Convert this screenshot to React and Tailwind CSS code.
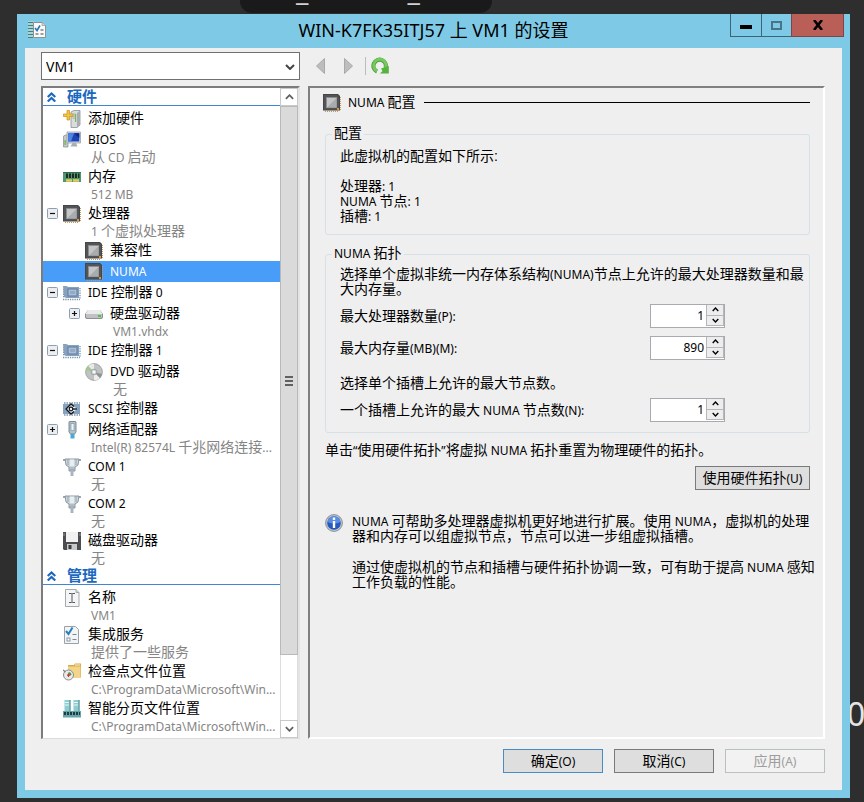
import { useState } from 'react'

// latin runs are set a little smaller than the chinese text around them
function Mixed({ text }) {
    return (
        <span>
            {text.split(/([\u0000-\u00ff\u201c\u201d]+)/).map((part, i) =>
                i % 2 ? (
                    <span key={i} className="font-['Noto_Sans',sans-serif] text-[12px] leading-none">{part}</span>
                ) : part
            )}
        </span>
    )
}

function Icon({ children }) {
    return (
        <svg viewBox="0 0 18 18" className="w-[18px] h-[18px] shrink-0" aria-hidden="true">
            {children}
        </svg>
    )
}

const ChipIcon = () => (
    <Icon>
        <path d="M2 17.500H16M17.500 3V16" stroke="#c79a5a" strokeWidth="1" strokeDasharray="1 1" />
        <path d="M0 0H15L17 2V16.500H0Z" fill="#454647" />
        <path d="M1 1H14.500L16 3V15.500H1Z" fill="#525457" />
        <rect x="3" y="3" width="11" height="11" fill="#8a8c8e" />
        <rect x="4" y="4" width="9.500" height="9.500" fill="#a9abad" />
        <path d="M4 13.500V4H13.500Z" fill="#c4c5c6" />
        <rect x="14" y="14" width="2" height="2" fill="#e0982e" />
    </Icon>
)

const AddIcon = () => (
    <Icon>
        <path d="M8 2L11 0.500H17V15L14 17.500H8Z" fill="#d9dbdc" stroke="#8b9092" strokeWidth=".8" />
        <path d="M14 3L17 0.500V15L14 17.500Z" fill="#a8adb0" />
        <path d="M9.500 4H12.500M9.500 6H12.500M9.500 8H12.500" stroke="#9ba1a4" strokeWidth=".8" />
        <rect x="12" y="4" width="1.200" height="8" fill="#75b956" />
        <path d="M4 0.500H6.500V4H10V6.500H6.500V10H4V6.500H0.500V4H4Z" fill="#f4c33c" stroke="#c98f1c" strokeWidth=".7" />
    </Icon>
)

const BiosIcon = () => (
    <Icon>
        <path d="M0.500 5L2.500 4H5V16H0.500Z" fill="#c3c8cb" stroke="#838a8f" strokeWidth=".7" />
        <rect x="1.500" y="9" width="1.200" height="5" fill="#6bb34c" />
        <path d="M4 1H17.500V12H4Z" fill="#d5d9dc" stroke="#8f979c" strokeWidth=".7" />
        <path d="M5.200 2.200H16.300V10.500H5.200Z" fill="#1d45b8" />
        <path d="M5.200 2.200H11L8 10.500H5.200Z" fill="#4e83e8" />
        <path d="M11 2.200H16.300V7Z" fill="#0c2683" />
        <path d="M9.500 12H13L14.500 15.500H7.500Z" fill="#a8afb4" />
    </Icon>
)

const MemoryIcon = () => (
    <Icon>
        <rect x="0" y="4" width="18" height="10" fill="#4c9a6c" />
        <path d="M0 4.500H18" stroke="#2f6f4a" />
        <path d="M3 5.500H5V10H3ZM6 5.500H8V10H6ZM9 5.500H11V10H9ZM12 5.500H14V10H12ZM15 5.500H16.500V10H15Z" fill="#20282a" />
        <path d="M3 12.500H16" stroke="#ecc75c" strokeWidth="2.400" strokeDasharray="6 1" />
    </Icon>
)

const IdeIcon = () => (
    <Icon>
        <path d="M1 3H5M0 15.500H17M17 4V15M0.500 5V14" stroke="#7a93ab" strokeWidth="1.300" strokeDasharray="1.300 1" />
        <path d="M0 2H3L4 3H16V14H3L1 13Z" fill="#87a2c0" />
        <rect x="5" y="5" width="9" height="7" fill="#abbed4" stroke="#5f7b9d" />
        <rect x="7" y="7" width="5" height="3" fill="#93abc8" />
    </Icon>
)

const HddIcon = () => (
    <Icon>
        <path d="M3 5H15L18 9V12Q18 14 15 14H3Q0 14 0 12V9Z" fill="#8d8f92" />
        <path d="M3 5H15L17.500 9H0.500Z" fill="#e9eaeb" />
        <path d="M1 9H17V12Q17 13 15 13H3Q1 13 1 12Z" fill="#bfc1c4" />
        <rect x="13" y="10" width="3" height="2" fill="#48c83a" />
    </Icon>
)

const DvdIcon = () => (
    <Icon>
        <circle cx="9" cy="9" r="8.400" fill="#bfc2c2" stroke="#94999a" strokeWidth=".8" />
        <path d="M9 9L3 3A8.400 8.400 0 0 1 9 .8Z" fill="#e8eaea" />
        <path d="M9 9L15 15A8.400 8.400 0 0 1 9 17.200Z" fill="#eceeee" />
        <path d="M9 9L1 7A8.400 8.400 0 0 1 3 3Z" fill="#a2c98a" />
        <path d="M9 9L17 11A8.400 8.400 0 0 1 15 15Z" fill="#8e9292" />
        <circle cx="9" cy="9" r="2.800" fill="#d7dada" stroke="#8a8f90" strokeWidth=".7" />
        <circle cx="9" cy="9" r="1.100" fill="#fff" />
    </Icon>
)

const ScsiIcon = () => (
    <Icon>
        <path d="M1 3H17M1 15H17" stroke="#7a93ab" strokeWidth="1.500" strokeDasharray="1.500 1" />
        <rect x="0" y="4" width="17" height="10" fill="#86a2c1" />
        <path d="M2 9L8 3.500L14 9L8 14.500Z" fill="#e9eef4" />
        <path d="M11 6.500L8 4L3 9L8 14L11 11.500" fill="none" stroke="#16191c" strokeWidth="1.400" />
        <path d="M9 9H14" stroke="#16191c" strokeWidth="1.400" />
        <circle cx="8" cy="9" r="1.800" fill="none" stroke="#16191c" strokeWidth="1.200" />
    </Icon>
)

const NetIcon = () => (
    <Icon>
        <path d="M6 1Q6 0.500 7 0.500H12Q13 0.500 13 1V11L11.500 13H7.500L6 11Z" fill="#b4c2cd" stroke="#6f8292" strokeWidth=".9" />
        <rect x="8" y="2.500" width="3" height="7" fill="#eef3f6" stroke="#8597a5" strokeWidth=".7" />
        <rect x="7.500" y="13" width="4" height="4.500" fill="#4aa7d6" />
    </Icon>
)

const ComIcon = () => (
    <Icon>
        <path d="M0 2H3M15 2H18" stroke="#7f8d98" strokeWidth="1.600" />
        <path d="M2 1H16L15 7L12 9V13H6V9L3 7Z" fill="#ccd5dc" stroke="#7f8d98" strokeWidth=".9" />
        <path d="M5 1V7M13 1V7M6.500 10H11.500M6.500 11.700H11.500" stroke="#8d9aa4" strokeWidth=".8" />
        <path d="M7 1.500H11V8H7Z" fill="#e8edf0" />
        <rect x="7.500" y="13" width="3" height="5" fill="#aab5bd" />
    </Icon>
)

const FloppyIcon = () => (
    <Icon>
        <path d="M0 0H18V18H1L0 17Z" fill="#4c4d50" />
        <rect x="3" y="0" width="12" height="10" fill="#f1f1f1" />
        <rect x="4" y="12" width="10" height="6" fill="#c8c9ca" />
        <rect x="5.500" y="13" width="3" height="4" fill="#3a3b3d" />
        <path d="M1 1V4M17 1V4" stroke="#8f9193" />
    </Icon>
)

const NameIcon = () => (
    <Icon>
        <path d="M2.500 .5H13L16 3.500V17.500H2.500Z" fill="#f4f5f5" stroke="#a4a9ac" />
        <path d="M13 .5V3.500H16" fill="#d2d6d8" stroke="#a4a9ac" />
        <path d="M6 4.500H8.500L9 5L9.500 4.500H12M9 5V13M6 13.500H8.500L9 13L9.500 13.500H12" fill="none" stroke="#55595c" />
    </Icon>
)

const ServicesIcon = () => (
    <Icon>
        <path d="M1.500 .5H12.500L15.500 3.500V17.500H1.500Z" fill="#f2f4f5" stroke="#9aa2a7" />
        <path d="M3 5L5.500 8L9.500 1.500" fill="none" stroke="#2580bd" strokeWidth="2" />
        <path d="M9.500 8.500H13.500M9.500 13.500H13.500" stroke="#7d878d" />
        <rect x="4" y="12" width="3" height="3" fill="#fff" stroke="#8a9aa6" />
    </Icon>
)

const CheckpointIcon = () => (
    <Icon>
        <path d="M5 2H11L12 0.500H18V14.500H5Z" fill="#d7aa4a" />
        <path d="M5 3.500H17.500V14.500H5Z" fill="#f2d58a" />
        <path d="M12 2H17" stroke="#fff3cf" />
        <circle cx="5.500" cy="12" r="5" fill="#e9eaea" stroke="#8a8d8e" />
        <path d="M0 7L2.500 9" stroke="#777a7b" strokeWidth="1.200" />
        <path d="M5.500 12V9A3 3 0 0 1 8.500 12Z" fill="#4da851" />
        <path d="M4 12.200H7.500M5.500 10.500V14" stroke="#c8362c" strokeWidth="1.200" />
    </Icon>
)

const PagingIcon = () => (
    <Icon>
        <path d="M1.500 0H7.500V11H1.500ZM10.500 0H16.500V11H10.500Z" fill="#8fcbd0" />
        <path d="M2 2.500H6M2 5H6M11 2.500H15M11 5H15" stroke="#e6f6f7" />
        <path d="M7 0V11M16 0V11" stroke="#4d8d94" />
        <rect x="0" y="11" width="18" height="6.500" fill="#63a5a8" />
        <path d="M1 13.500H17" stroke="#1e3b40" strokeWidth="3" strokeDasharray="2 1" />
    </Icon>
)

const SettingsIcon = () => (
    <svg viewBox="0 0 20 20" className="w-5 h-5" aria-hidden="true">
        <path d="M1 1H7V18H1Z" fill="#a9d3d4" />
        <path d="M1 2.500H6M1 5.500H6M1 8.500H6M1 11.500H6M1 14.500H6M1 17.500H6" stroke="#3d8187" />
        <path d="M6.500 2.500H15L18.500 5.500V17.500H6.500Z" fill="#fafafa" stroke="#8d9295" />
        <path d="M15 2.500V5.500H18.500" fill="#ddd" stroke="#8d9295" strokeWidth=".7" />
        <path d="M8 8L10 10.500L13 5.500" fill="none" stroke="#2775b5" strokeWidth="1.600" />
        <path d="M13.500 10H16.500M13.500 14H16.500M8.500 14H11.500" stroke="#7b8388" strokeWidth="1.300" />
    </svg>
)

const HARDWARE = [
    { id: 'add', name: '添加硬件', icon: AddIcon },
    { id: 'bios', name: 'BIOS', sub: '从 CD 启动', icon: BiosIcon },
    { id: 'memory', name: '内存', sub: '512 MB', icon: MemoryIcon },
    { id: 'cpu', name: '处理器', sub: '1 个虚拟处理器', icon: ChipIcon, expander: 'minus' },
    { id: 'compat', name: '兼容性', icon: ChipIcon, nested: true },
    { id: 'numa', name: 'NUMA', icon: ChipIcon, nested: true },
    { id: 'ide0', name: 'IDE 控制器 0', icon: IdeIcon, expander: 'minus' },
    { id: 'hdd', name: '硬盘驱动器', sub: 'VM1.vhdx', icon: HddIcon, nested: true, expander: 'plus' },
    { id: 'ide1', name: 'IDE 控制器 1', icon: IdeIcon, expander: 'minus' },
    { id: 'dvd', name: 'DVD 驱动器', sub: '无', icon: DvdIcon, nested: true },
    { id: 'scsi', name: 'SCSI 控制器', icon: ScsiIcon },
    { id: 'net', name: '网络适配器', sub: 'Intel(R) 82574L 千兆网络连接...', icon: NetIcon, expander: 'plus' },
    { id: 'com1', name: 'COM 1', sub: '无', icon: ComIcon },
    { id: 'com2', name: 'COM 2', sub: '无', icon: ComIcon },
    { id: 'floppy', name: '磁盘驱动器', sub: '无', icon: FloppyIcon }
]

const MANAGEMENT = [
    { id: 'name', name: '名称', sub: 'VM1', icon: NameIcon },
    { id: 'services', name: '集成服务', sub: '提供了一些服务', icon: ServicesIcon },
    { id: 'checkpoint', name: '检查点文件位置', sub: 'C:\\ProgramData\\Microsoft\\Win...', icon: CheckpointIcon },
    { id: 'paging', name: '智能分页文件位置', sub: 'C:\\ProgramData\\Microsoft\\Win...', icon: PagingIcon }
]

function Expander({ type }) {
    if (!type) return <span className="w-[11px] shrink-0" />
    return (
        <svg viewBox="0 0 11 11" className="w-[11px] h-[11px] shrink-0" aria-hidden="true">
            <rect x=".5" y=".5" width="10" height="10" rx="1" fill="#eceef0" stroke="#8ba0b5" />
            <path d={type === 'plus' ? 'M3 5.500H8M5.500 3V8' : 'M3 5.500H8'} stroke="#111" strokeWidth="1.200" />
        </svg>
    )
}

function TreeItem({ item, selected, onSelect }) {
    const ItemIcon = item.icon
    return (
        <li>
            <button
                onClick={() => onSelect(item.id)}
                className={`block w-full text-left whitespace-nowrap ${selected ? 'bg-[#489df8] text-white' : 'text-black'}`}
            >
                <span className={`flex items-center h-[21px] ${item.nested ? 'pl-[26px]' : 'pl-1'}`}>
                    <Expander type={item.expander} />
                    <span className="ml-[5px] mr-[7px]"><ItemIcon /></span>
                    <Mixed text={item.name} />
                </span>
                {item.sub && (
                    <span className={`block h-4 leading-[14px] text-[#858585] ${item.nested ? 'pl-[70px]' : 'pl-12'}`}>
                        <Mixed text={item.sub} />
                    </span>
                )}
            </button>
        </li>
    )
}

function TreeGroup({ title, items, selected, onSelect }) {
    return (
        <section>
            <h2 className="flex items-center h-[18px] mb-0.5 pl-1 border-b border-[#3f87d2] text-[#1c68c0] text-[15px] font-bold">
                <svg viewBox="0 0 9 10" className="w-[9px] h-[10px] mr-[11px]" fill="none" stroke="currentColor" strokeWidth="2.200" aria-hidden="true">
                    <path d="M.7 5L4.500 1.500L8.300 5M.7 9.500L4.500 6L8.300 9.500" />
                </svg>
                {title}
            </h2>
            <ul>
                {items.map(item => (
                    <TreeItem key={item.id} item={item} selected={selected === item.id} onSelect={onSelect} />
                ))}
            </ul>
        </section>
    )
}

function Chevron({ down, className }) {
    return (
        <svg viewBox="0 0 10 6" className={className} fill="none" stroke="currentColor" strokeWidth="2" aria-hidden="true">
            <path d={down ? 'M1 1L5 5L9 1' : 'M1 5L5 1L9 5'} />
        </svg>
    )
}

function ScrollBar() {
    return (
        <div className="w-[18px] shrink-0 flex flex-col bg-white text-[#606060]">
            <button aria-label="向上滚动" className="h-[18px] flex items-center justify-center border border-[#c9c9c9]">
                <Chevron className="w-[9px] h-[6px]" />
            </button>
            <div className="grow-[549] flex flex-col items-center justify-center gap-0.5 bg-[#dadada] border border-[#b9b9b9]">
                <span className="w-2 h-0.5 bg-[#606060]" />
                <span className="w-2 h-0.5 bg-[#606060]" />
                <span className="w-2 h-0.5 bg-[#606060]" />
            </div>
            <div className="grow-[66] border-x border-[#dedede]" />
            <button aria-label="向下滚动" className="h-[18px] flex items-center justify-center border border-[#c9c9c9]">
                <Chevron down className="w-[9px] h-[6px]" />
            </button>
        </div>
    )
}

function SpinRow({ id, label, value, onChange }) {
    return (
        <div className="flex items-center h-6">
            <label htmlFor={id} className="w-[310px]"><Mixed text={label} /></label>
            <div className="flex w-[75px] h-6 bg-white border border-[#a9aaaf]">
                <input
                    id={id}
                    type="text"
                    value={value}
                    onChange={e => onChange(Number(e.target.value) || 0)}
                    className="min-w-0 flex-1 pr-0.5 pb-0.5 text-right font-['Noto_Sans',sans-serif] text-[12px] outline-none"
                />
                <div className="flex flex-col w-[18px] mb-px bg-[#ededed] border border-t-0 border-[#b5b6ba]">
                    <button aria-label="增加" onClick={() => onChange(value + 1)} className="flex-1 flex items-center justify-center border-b border-[#b5b6ba]">
                        <Chevron className="w-[7px] h-[5px]" />
                    </button>
                    <button aria-label="减少" onClick={() => onChange(value - 1)} className="flex-1 flex items-center justify-center">
                        <Chevron down className="w-[7px] h-[5px]" />
                    </button>
                </div>
            </div>
        </div>
    )
}

export default function App() {
    const [selected, setSelected] = useState('numa')
    const [processors, setProcessors] = useState(1)
    const [memory, setMemory] = useState(890)
    const [nodes, setNodes] = useState(1)

    return (
        <div className="relative min-h-screen flex flex-col overflow-hidden bg-[#2e2e2e] pt-[14px] pb-1 pl-[17px] pr-[14px] font-['Liberation_Sans','Noto_Sans_CJK_SC',sans-serif] text-[14px] leading-[15px] text-black">
            {/* parts of the desktop that show around the window */}
            <div className="absolute top-0 left-[240px] w-[252px] h-[13px] pr-4 rounded-b-xl bg-[#1a1a1a] overflow-hidden flex justify-center gap-[99px] text-[#d0d0d0] font-['Noto_Sans',sans-serif] text-[28px] leading-none">
                <span className="-mt-6">_</span>
                <span className="-mt-6">_</span>
            </div>
            <div className="absolute right-0 top-[696px] w-[17px] text-[#e4e4e4] font-['Noto_Sans',sans-serif] text-[32px] leading-9">0</div>

            <main className="relative flex-1 flex flex-col bg-[#7ecae6] px-2 pb-2">
                <header className="grid grid-cols-[1fr_auto_1fr] h-[34px]">
                    <div className="pl-0.5 pt-1.5"><SettingsIcon /></div>
                    <h1 className="self-center pb-0.5 font-['Noto_Sans','Noto_Sans_CJK_SC',sans-serif] text-[18px] leading-6 whitespace-nowrap">
                        WIN-K7FK35ITJ57 上 VM1 的设置
                    </h1>
                    <div className="flex justify-end h-[23px] -mr-0.5">
                        <button aria-label="最小化" className="w-8 flex items-center justify-center border border-t-0 border-[#3c6474]">
                            <span className="w-3 h-1 mt-1 bg-black" />
                        </button>
                        <button aria-label="最大化" className="w-[29px] flex items-center justify-center border-b border-[#3c6474]">
                            <span className="w-[11px] h-[9px] border-2 border-[#477585]" />
                        </button>
                        <button aria-label="关闭" className="w-[53px] flex items-center justify-center border border-t-0 border-[#7b4643] bg-[#b95f58]">
                            <svg viewBox="0 0 10 10" className="w-[10px] h-[10px]" stroke="#000" strokeWidth="2.600" aria-hidden="true">
                                <path d="M1 0L9 10M9 0L1 10" />
                            </svg>
                        </button>
                    </div>
                </header>

                <div className="flex-1 flex flex-col bg-[#efefef] pl-4 pr-[17px] pt-1 pb-[17px]">
                    <div className="flex items-center">
                        <div className="relative w-[259px] h-7">
                            <select aria-label="虚拟机" defaultValue="VM1" className="w-full h-full pl-1 appearance-none bg-white border border-[#707070] font-['Noto_Sans',sans-serif] text-[14px] outline-none">
                                <option>VM1</option>
                            </select>
                            <Chevron down className="absolute right-[5px] top-[12px] w-[10px] h-[6px] text-[#444] pointer-events-none" />
                        </div>
                        <button aria-label="后退" className="ml-4">
                            <svg viewBox="0 0 9 16" className="w-[9px] h-4"><path d="M8.500 .5V15.500L.5 8Z" fill="#bdbdbd" stroke="#a9a9a9" /></svg>
                        </button>
                        <button aria-label="前进" className="ml-[19px]">
                            <svg viewBox="0 0 9 16" className="w-[9px] h-4"><path d="M.5 .5V15.500L8.500 8Z" fill="#bdbdbd" stroke="#a9a9a9" /></svg>
                        </button>
                        <span className="ml-3 mr-[5px] w-px h-[18px] bg-[#bcbcbc]" />
                        <button aria-label="刷新">
                            <svg viewBox="0 0 18 18" className="w-[18px] h-[18px]" fill="none">
                                <path d="M6 14.500A6.200 6.200 0 1 1 14.500 11" stroke="#4b9e3a" strokeWidth="4.200" />
                                <path d="M6 14A6.200 6.200 0 1 1 14.500 11" stroke="#76c95e" strokeWidth="2.800" />
                                <path d="M17.800 9V16.500H9L11.500 14L10 11.500Z" fill="#54b23d" />
                            </svg>
                        </button>
                    </div>

                    <div className="flex-1 flex gap-2 mt-1.5">
                        <nav className="flex w-[259px] shrink-0 bg-white border-t-2 border-l-2 border-r-2 border-b border-t-[#7c7c7c] border-l-[#7c7c7c] border-r-[#e4e4e4] border-b-[#dcdcdc]">
                            <div className="flex-1 min-w-0">
                                <TreeGroup title="硬件" items={HARDWARE} selected={selected} onSelect={setSelected} />
                                <TreeGroup title="管理" items={MANAGEMENT} selected={selected} onSelect={setSelected} />
                            </div>
                            <ScrollBar />
                        </nav>

                        <section className="flex-1 min-w-0 pl-[15px] pr-[13px] pt-1.5 border-t-2 border-l-2 border-r-2 border-b-2 border-t-[#808080] border-l-[#808080] border-r-white border-b-white">
                            <div className="flex items-center h-[17px] -ml-0.5">
                                <ChipIcon />
                                <h2 className="ml-[7px] mr-2 whitespace-nowrap"><Mixed text="NUMA 配置" /></h2>
                                <span className="flex-1 h-px bg-black" />
                            </div>

                            <fieldset className="mt-[15px] border border-[#d5e0e7] rounded-[3px] pl-[14px] pb-2.5">
                                <legend className="-ml-2 px-0.5 h-4"><Mixed text="配置" /></legend>
                                <p className="mt-[7px] mb-[15px]">此虚拟机的配置如下所示:</p>
                                <p><Mixed text="处理器: 1" /></p>
                                <p><Mixed text="NUMA 节点: 1" /></p>
                                <p><Mixed text="插槽: 1" /></p>
                            </fieldset>

                            <fieldset className="mt-[11px] border border-[#d5e0e7] rounded-[3px] pl-[14px] pb-2.5">
                                <legend className="-ml-2 px-0.5 h-4"><Mixed text="NUMA 拓扑" /></legend>
                                <p className="mt-[5px] mb-[7px]">
                                    <Mixed text="选择单个虚拟非统一内存体系结构(NUMA)节点上允许的最大处理器数量和最大内存量。" />
                                </p>
                                <SpinRow id="processors" label="最大处理器数量(P):" value={processors} onChange={setProcessors} />
                                <div className="h-2" />
                                <SpinRow id="memory" label="最大内存量(MB)(M):" value={memory} onChange={setMemory} />
                                <p className="mt-4 mb-[7px]">选择单个插槽上允许的最大节点数。</p>
                                <SpinRow id="nodes" label="一个插槽上允许的最大 NUMA 节点数(N):" value={nodes} onChange={setNodes} />
                            </fieldset>

                            <p className="mt-2.5"><Mixed text="单击“使用硬件拓扑”将虚拟 NUMA 拓扑重置为物理硬件的拓扑。" /></p>
                            <div className="flex justify-end mt-2">
                                <button className="w-[115px] h-6 bg-[#dedede] border border-[#7a7a7a] whitespace-nowrap"><Mixed text="使用硬件拓扑(U)" /></button>
                            </div>

                            <div className="flex mt-6 -mr-3">
                                <svg viewBox="0 0 18 18" className="w-[18px] h-[18px] shrink-0" aria-hidden="true">
                                    <circle cx="9" cy="9" r="8.400" fill="#c3c7cc" stroke="#8b8f95" />
                                    <circle cx="9" cy="9" r="6.800" fill="#2359c0" />
                                    <path d="M2.500 8A6.600 6.600 0 0 1 15.500 8Q9 11 2.500 8Z" fill="#5b8de0" />
                                    <rect x="7.800" y="3.500" width="2.400" height="2.400" fill="#fff" />
                                    <rect x="7.800" y="7" width="2.400" height="7" fill="#fff" />
                                </svg>
                                <div className="ml-[9px]">
                                    <p><Mixed text="NUMA 可帮助多处理器虚拟机更好地进行扩展。使用 NUMA，虚拟机的处理器和内存可以组虚拟节点，节点可以进一步组虚拟插槽。" /></p>
                                    <p className="mt-4"><Mixed text="通过使虚拟机的节点和插槽与硬件拓扑协调一致，可有助于提高 NUMA 感知工作负载的性能。" /></p>
                                </div>
                            </div>
                        </section>
                    </div>

                    <footer className="flex justify-end gap-[11px] mt-2.5">
                        <button className="w-[100px] h-6 bg-[#dedede] border border-[#4a8cc0]"><Mixed text="确定(O)" /></button>
                        <button className="w-[100px] h-6 bg-[#dedede] border border-[#7a7a7a]"><Mixed text="取消(C)" /></button>
                        <button disabled className="w-[100px] h-6 bg-[#f2f2f2] border border-[#b9c0c4] text-[#9d9d9d]"><Mixed text="应用(A)" /></button>
                    </footer>
                </div>
            </main>
        </div>
    )
}
